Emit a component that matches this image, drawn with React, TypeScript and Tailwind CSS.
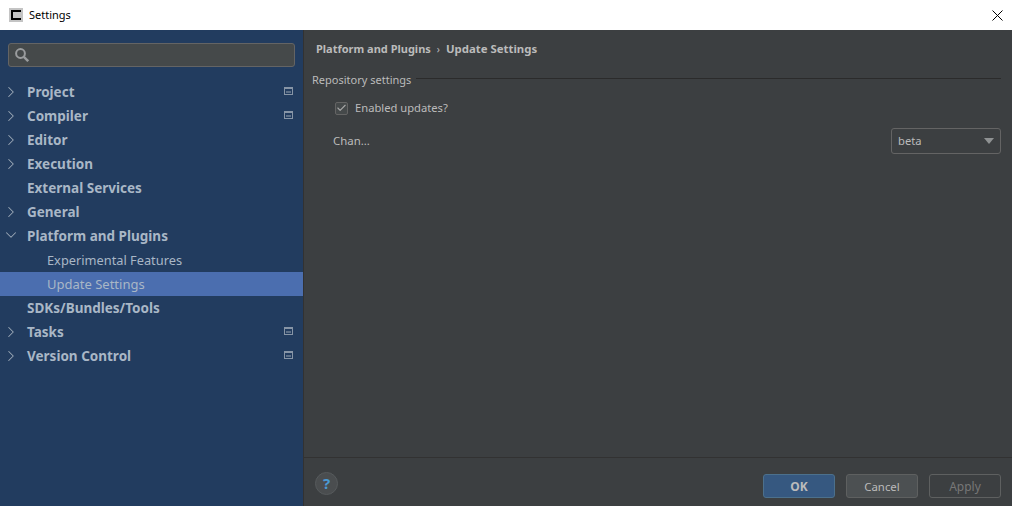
import { ChevronRight, ChevronDown, Check } from "lucide-react";

const font = "font-['Noto_Sans','Open_Sans',sans-serif]";

type Item = {
  label: string;
  arrow?: "right" | "down";
  project?: boolean;
  child?: boolean;
  selected?: boolean;
};

const items: Item[] = [
  { label: "Project", arrow: "right", project: true },
  { label: "Compiler", arrow: "right", project: true },
  { label: "Editor", arrow: "right" },
  { label: "Execution", arrow: "right" },
  { label: "External Services" },
  { label: "General", arrow: "right" },
  { label: "Platform and Plugins", arrow: "down" },
  { label: "Experimental Features", child: true },
  { label: "Update Settings", child: true, selected: true },
  { label: "SDKs/Bundles/Tools" },
  { label: "Tasks", arrow: "right", project: true },
  { label: "Version Control", arrow: "right", project: true },
];

const ProjectIcon = () => (
  <div className="w-[9px] h-[8px] border border-t-2 border-[#8795a6] flex items-center justify-center -translate-y-px">
    <div className="w-[5px] h-[2px] bg-[#5d7088]"></div>
  </div>
);

const TreeRow = ({ item }: { item: Item }) => (
  <div className={`h-6 flex items-center relative ${item.selected ? "bg-[#4b6eaf]" : ""}`}>
    {item.arrow === "right" && (
      <ChevronRight size={18} strokeWidth={1.4} className="absolute left-[2px] top-[3px] text-[#9ba8b6]" />
    )}
    {item.arrow === "down" && (
      <ChevronDown size={18} strokeWidth={1.4} className="absolute left-[2px] top-[2px] text-[#9ba8b6]" />
    )}
    {item.child ? (
      <span className={`pl-[47px] leading-none text-[#a9b7c6] ${item.selected ? "text-[13px]" : "text-[12.8px]"}`}>
        {item.label}
      </span>
    ) : (
      <span className="pl-[27px] pt-[2px] text-[13.5px] leading-none font-bold text-[#a9b7c6]">{item.label}</span>
    )}
    {item.project && (
      <div className="ml-auto mr-[10px]">
        <ProjectIcon />
      </div>
    )}
  </div>
);

export default function App() {
  return (
    <div className={`${font} w-[1012px] h-[506px] flex flex-col overflow-hidden`}>
      <div className="h-[30px] bg-white flex items-center shrink-0">
        <div className="ml-[9px] w-[14px] h-[14px] bg-[#c4c4c4] flex items-center justify-center">
          <div className="w-[10px] h-[10px] border-2 border-r-0 border-black"></div>
        </div>
        <span className="ml-[6px] text-[11px] text-black">Settings</span>
        <svg width="11" height="11" viewBox="0 0 11 11" className="ml-auto mr-[9px] text-black">
          <path d="M0.5 0.5L10.5 10.5M10.5 0.5L0.5 10.5" stroke="currentColor" strokeWidth="1" fill="none" />
        </svg>
      </div>

      <div className="flex flex-1 min-h-0">
        <div className="w-[303px] bg-[#223c5f] shrink-0">
          <div className="pt-[13px] px-2 pb-[13px]">
            <div className="h-6 w-[287px] bg-[#45494a] border border-[#646464] rounded-[3px] flex items-center pl-[6px]">
              <svg width="14" height="14" viewBox="0 0 14 14" fill="none" stroke="#9a9c9e" strokeWidth="2">
                <circle cx="5.5" cy="5.5" r="4.4" />
                <path d="M8.8 8.8L13.2 13.2" strokeWidth="2.4" />
              </svg>
            </div>
          </div>
          {items.map((item) => (
            <TreeRow key={item.label} item={item} />
          ))}
        </div>
        <div className="w-px bg-[#323232] shrink-0"></div>

        <div className="flex-1 bg-[#3c3f41] flex flex-col min-w-0">
          <div className="flex-1 min-h-0">
            <div className="h-[38px] flex items-center pl-3 font-bold text-[#bbbbbb]">
              <span className="text-[11px]">Platform and Plugins</span>
              <span className="mx-[6px] font-normal text-[10px]">›</span>
              <span className="text-[11.4px]">Update Settings</span>
            </div>
            <div className="pl-2 pr-[11px] flex items-center gap-[5px] h-[24px]">
              <span className="text-[11px] text-[#bbbbbb]">Repository settings</span>
              <div className="flex-1 h-px bg-[#2b2b2b] -translate-y-[2px]"></div>
            </div>
            <div className="mt-[4px] pl-[31px] h-6 flex items-center">
              <div className="w-[13px] h-[13px] bg-[#45494a] border border-[#646464] rounded-[2px] flex items-center justify-center">
                <Check size={12} strokeWidth={2.4} className="text-[#a8a8a8]" />
              </div>
              <span className="ml-[7px] text-[11.2px] text-[#bbbbbb]">Enabled updates?</span>
            </div>
            <div className="mt-[8px] pl-[29px] pr-[11px] h-[26px] flex items-center justify-between">
              <span className="text-[11.4px] text-[#bbbbbb]">Chan...</span>
              <div className="w-[110px] h-[26px] border border-[#646464] rounded-[3px] flex items-center pl-[6px] pr-[6px]">
                <span className="text-[11.2px] text-[#bbbbbb]">beta</span>
                <div className="ml-auto w-0 h-0 border-l-[5px] border-r-[5px] border-t-[6px] border-l-transparent border-r-transparent border-t-[#8f9293]"></div>
              </div>
            </div>
          </div>

          <div className="h-[49px] border-t border-[#323232] shrink-0 flex items-start pt-[16px] pl-[11px] pr-[11px]">
            <div className="w-[23px] h-[23px] rounded-full bg-[#4a4d4f] border border-[#565a5c] -mt-[2px] flex items-center justify-center text-[15px] font-bold text-[#4a9ad4]">
              ?
            </div>
            <div className="ml-auto flex gap-[11px]">
              <button className="w-[72px] h-6 pt-[2px] bg-[#365880] border border-[#4c708c] rounded-[3px] text-xs font-bold text-[#bbbbbb]">OK</button>
              <button className="w-[72px] h-6 pt-[2px] bg-[#4c5052] border border-[#5e6060] rounded-[3px] text-[11.4px] text-[#bbbbbb]">Cancel</button>
              <button className="w-[72px] h-6 pt-[2px] border border-[#5e6060] rounded-[3px] text-xs text-[#777777]">Apply</button>
            </div>
          </div>
        </div>
      </div>
    </div>
  );
}
